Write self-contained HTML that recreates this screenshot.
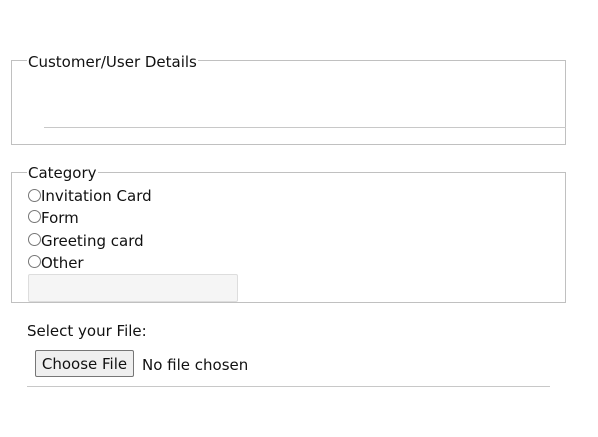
<!DOCTYPE html>
<html><head><style>
body{margin:0;width:598px;height:437px;background:#fff;font-family:"DejaVu Sans","Liberation Sans",sans-serif;font-size:15px;color:#111;position:relative;overflow:hidden}
.a{position:absolute;white-space:nowrap;line-height:17px}
.b{position:absolute;border:1px solid #c0c0c0}
.r{position:absolute;width:11px;height:11px;border:1px solid #777;border-radius:50%;background:#fff}
</style></head><body>
<div class="b" style="left:11px;top:60px;width:553px;height:83px"></div>
<div class="a" style="left:27px;top:54px;background:#fff;padding:0 1px">Customer/User Details</div>
<div style="position:absolute;left:44px;top:127px;width:522px;height:1px;background:#c8c8c8"></div>

<div class="b" style="left:11px;top:172px;width:553px;height:129px"></div>
<div class="a" style="left:27px;top:165px;background:#fff;padding:0 1px">Category</div>
<div class="r" style="left:28px;top:189px"></div><div class="a" style="left:41px;top:188px">Invitation Card</div>
<div class="r" style="left:28px;top:210px"></div><div class="a" style="left:41px;top:210px">Form</div>
<div class="r" style="left:28px;top:233px"></div><div class="a" style="left:41px;top:233px">Greeting card</div>
<div class="r" style="left:28px;top:255px"></div><div class="a" style="left:41px;top:255px">Other</div>
<div style="position:absolute;left:28px;top:274px;width:208px;height:26px;background:#f5f5f5;border:1px solid #ddd;border-radius:2px"></div>

<div class="a" style="left:27px;top:323px">Select your File:</div>
<div style="position:absolute;left:35px;top:350px;width:99px;height:27px;background:#efefef;border:1px solid #767676;border-radius:2px;box-sizing:border-box;text-align:center;line-height:27px">Choose File</div>
<div class="a" style="left:142px;top:357px">No file chosen</div>
<div style="position:absolute;left:27px;top:386px;width:523px;height:1px;background:#c8c8c8"></div>
</body></html>
